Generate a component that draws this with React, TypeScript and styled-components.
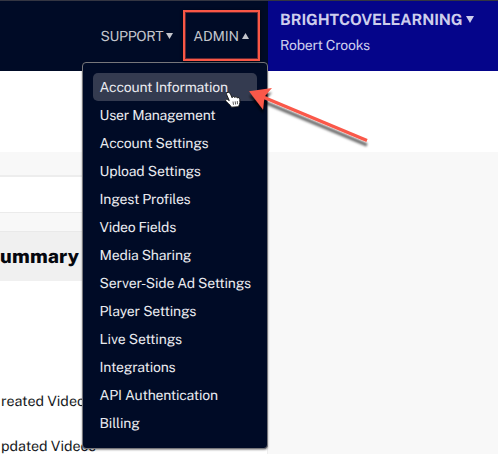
import React from "react";
import styled, { createGlobalStyle } from "styled-components";

const GlobalStyle = createGlobalStyle`
  * { box-sizing: border-box; }
  body {
    margin: 0;
    overflow: hidden;
    background: #fff;
    font-family: "Public Sans", Inter, "Liberation Sans", sans-serif;
    text-rendering: geometricPrecision;
  }
`;

const Page = styled.div`
  position: relative;
  display: flex;
  flex-direction: column;
  width: 498px;
  height: 454px;
  overflow: hidden;
`;

const Header = styled.header`
  display: flex;
  height: 71px;
  flex: none;
  background: #000b26;
  border-top: 1px solid #343642;
`;

const Nav = styled.nav`
  display: flex;
  align-items: center;
  width: 268px;
  padding: 2px 0 0 100.5px;
  gap: 20px;
`;

const NavItem = styled.div<{ $spacing: number }>`
  display: flex;
  align-items: center;
  gap: 3px;
  height: 20px;
  color: #c3c5cc;
  font-size: 14px;
  line-height: 20px;
  letter-spacing: ${(p) => p.$spacing}px;
  white-space: nowrap;

  svg { margin-bottom: 2px; }
`;

const Account = styled.div`
  flex: 1;
  padding: 9px 0 0 12px;
  background: #05058a;
  color: #cdcdec;
`;

const AccountName = styled.div`
  display: flex;
  align-items: center;
  gap: 4px;
  height: 20px;
  font-size: 15.5px;
  font-weight: 700;
  line-height: 20px;
  letter-spacing: -0.11px;
  white-space: nowrap;

  svg { margin-bottom: 1px; }
`;

const UserName = styled.div`
  margin-top: 6px;
  font-size: 14px;
  line-height: 20px;
  letter-spacing: -0.25px;
  white-space: nowrap;
`;

const Toolbar = styled.div`
  height: 81px;
  flex: none;
  background: #fff;
`;

const Content = styled.div`
  display: flex;
  flex: 1;
  background: #f8f8f8;
`;

const Summary = styled.main`
  width: 268px;
  padding-top: 23px;
  border-right: 1px solid #eee;
`;

const SearchField = styled.div`
  height: 38px;
  background: #fff;
  border-top: 2px solid #ededed;
  border-bottom: 1px solid #ebebeb;
`;

const SummaryTitle = styled.h2`
  height: 50px;
  margin: 18px 0 0;
  background: #f0f0f0;
  border-top: 1px solid #e9e9e9;
  color: #05070e;
  font-size: 19.5px;
  font-weight: 800;
  line-height: 49px;
  letter-spacing: 0.2px;
`;

const Stats = styled.div`
  height: 200px;
  padding: 110px 0 0 1px;
  background: #fff;
`;

const Stat = styled.div`
  height: 45px;
  color: #181b24;
  font-size: 14.3px;
  line-height: 22px;
  letter-spacing: 0px;
`;

const Menu = styled.ul`
  position: absolute;
  left: 82px;
  top: 62px;
  width: 186px;
  height: 387px;
  margin: 0;
  padding: 10px;
  list-style: none;
  background: #000b26;
  border: 1px solid #77777b;
  border-radius: 4px;
  box-shadow: 0 1px 2px #0006;
`;

const MenuItem = styled.li<{ $active: boolean; $spacing: number }>`
  height: 28px;
  width: 164px;
  padding-left: 6.6px;
  border-radius: 5px;
  background: ${(p) => (p.$active ? "#343b50" : "transparent")};
  color: #e9eaef;
  font-size: 14px;
  line-height: 30px;
  letter-spacing: ${(p) => p.$spacing}px;
  white-space: nowrap;
`;

const Highlight = styled.div`
  position: absolute;
  left: 183px;
  top: 10px;
  width: 77px;
  height: 51px;
  border: 2px solid #f95746;
  box-shadow: 0 1px 3px #0009, inset 0 0 0 1px #f9574666;
`;

const Overlay = styled.svg`
  position: absolute;
  left: 0;
  top: 0;
  pointer-events: none;
`;

const items: [string, number][] = [
  ["Account Information", -0.24],
  ["User Management", -0.23],
  ["Account Settings", -0.2],
  ["Upload Settings", -0.17],
  ["Ingest Profiles", -0.21],
  ["Video Fields", -0.25],
  ["Media Sharing", -0.2],
  ["Server-Side Ad Settings", -0.2],
  ["Player Settings", -0.17],
  ["Live Settings", -0.13],
  ["Integrations", -0.2],
  ["API Authentication", -0.22],
  ["Billing", -0.2],
];

const Triangle = ({ up = false, size = 7 }: { up?: boolean; size?: number }) => (
  <svg width={size} height={size - 1} viewBox="0 0 7 6">
    <path d={up ? "M0 6L3.5 0L7 6Z" : "M0 0H7L3.5 6Z"} fill="currentColor" />
  </svg>
);

export default function App() {
  return (
    <Page>
      <GlobalStyle />
      <Header>
        <Nav>
          <NavItem $spacing={-0.31}>SUPPORT<Triangle /></NavItem>
          <NavItem $spacing={-0.2}>ADMIN<Triangle up /></NavItem>
        </Nav>
        <Account>
          <AccountName>BRIGHTCOVELEARNING<Triangle size={8} /></AccountName>
          <UserName>Robert Crooks</UserName>
        </Account>
      </Header>
      <Toolbar />
      <Content>
        <Summary>
          <SearchField />
          <SummaryTitle>ummary</SummaryTitle>
          <Stats>
            <Stat>reated Videos</Stat>
            <Stat>pdated Videos</Stat>
          </Stats>
        </Summary>
      </Content>
      <Menu>
        {items.map(([label, spacing], i) => (
          <MenuItem key={label} $active={i === 0} $spacing={spacing}>{label}</MenuItem>
        ))}
      </Menu>
      <Highlight />
      <Overlay width="498" height="454" viewBox="0 0 498 454">
        <defs>
          <filter id="arrowShadow" x="-20%" y="-20%" width="140%" height="160%">
            <feDropShadow dx="0" dy="4.5" stdDeviation="1.3" floodColor="#000" floodOpacity="0.6" />
          </filter>
        </defs>
        <g filter="url(#arrowShadow)">
          <path d="M263 97L367 140.5" stroke="#fa5849" strokeWidth="3.3" fill="none" />
          <path d="M249 91.3L272 88L264.5 96.5L263 109.5Z" fill="#fa5849" />
        </g>
        <path
          d="M227 92.7C228.4 91.5 229.8 92.5 230.5 94.2L232.2 97.8C232 96.3 234.2 96 234.8 97.5C235.4 96.3 237 96.7 237.3 98C238.6 97 239.7 98.2 239.8 99.5L239.9 102.5C239.8 104.1 239.1 105.1 238.5 106.7L231.5 107.2C230 104.5 227.6 103 226 101.2C224.9 99.9 226.3 98.7 228 99.8L229.3 100.6L226.8 95C226.5 94.1 226.4 93.3 227 92.7Z"
          fill="#fff"
          stroke="#111"
          strokeWidth="0.9"
        />
        <path d="M233 101.5L233.5 104.8M235.2 101.3L235.6 104.5M237.3 101L237.5 104.2" stroke="#333" strokeWidth="0.8" />
      </Overlay>
    </Page>
  );
}
